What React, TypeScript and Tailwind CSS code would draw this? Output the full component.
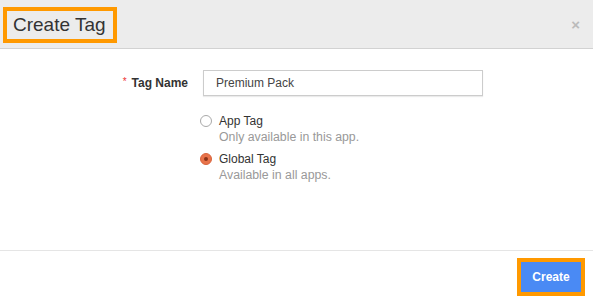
import React from "react";

const RadioOption = ({
  checked,
  label,
  hint,
}: {
  checked?: boolean;
  label: string;
  hint: string;
}) => (
  <div className="flex flex-col">
    <div className="flex items-center h-[16px]">
      {checked ? (
        <span className="w-[12px] h-[12px] rounded-full bg-[#e8734a] border border-[#d9643c] flex items-center justify-center">
          <span className="w-[4px] h-[4px] rounded-full bg-[#8a3318]" />
        </span>
      ) : (
        <span className="w-[12px] h-[12px] rounded-full bg-white border border-[#a9a9a9]" />
      )}
      <span className="ml-[7px] text-[12px] text-[#333]">{label}</span>
    </div>
    <div className="ml-[19px] h-[16px] leading-[16px] text-[12.3px] text-[#999]">{hint}</div>
  </div>
);

export default function App() {
  return (
    <div
      className="w-[593px] h-[299px] bg-white flex flex-col overflow-hidden"
      style={{ fontFamily: '"Liberation Sans", Arial, sans-serif' }}
    >
      <header className="h-[49px] shrink-0 bg-[#ececec] border-b border-[#d2d2d2] flex items-start justify-between">
        <div className="ml-[3px] mt-[7px] w-[114px] h-[36px] border-4 border-[#ff9900] pl-[6px] flex items-center text-[19px] text-[#333]">
          Create Tag
        </div>
        <span className="mr-[13px] mt-[14px] text-[15px] font-bold text-[#bbb]">×</span>
      </header>

      <main className="flex-1 pt-[21px]">
        <div className="flex items-center">
          <label className="w-[188px] text-right text-[12px] font-bold text-[#333]">
            <span className="text-[#e33] font-normal mr-[5px] align-top text-[10px]">*</span>
            Tag Name
          </label>
          <input
            readOnly
            value="Premium Pack"
            className="ml-[15px] w-[280px] h-[26px] border border-[#ccc] shadow-[0_1px_1px_rgba(0,0,0,0.08)] px-[12px] text-[12px] text-[#444] outline-none"
          />
        </div>

        <div className="ml-[200px] mt-[17px] flex flex-col gap-[6px]">
          <RadioOption label="App Tag" hint="Only available in this app." />
          <RadioOption checked label="Global Tag" hint="Available in all apps." />
        </div>
      </main>

      <footer className="h-[49px] shrink-0 border-t border-[#e5e5e5] flex justify-end pt-[7px] pr-[8px]">
        <div className="w-[68px] h-[38px] border-4 border-[#ff9900]">
          <button className="w-full h-full bg-[#4a8af4] text-white text-[12px] font-bold">
            Create
          </button>
        </div>
      </footer>
    </div>
  );
}
